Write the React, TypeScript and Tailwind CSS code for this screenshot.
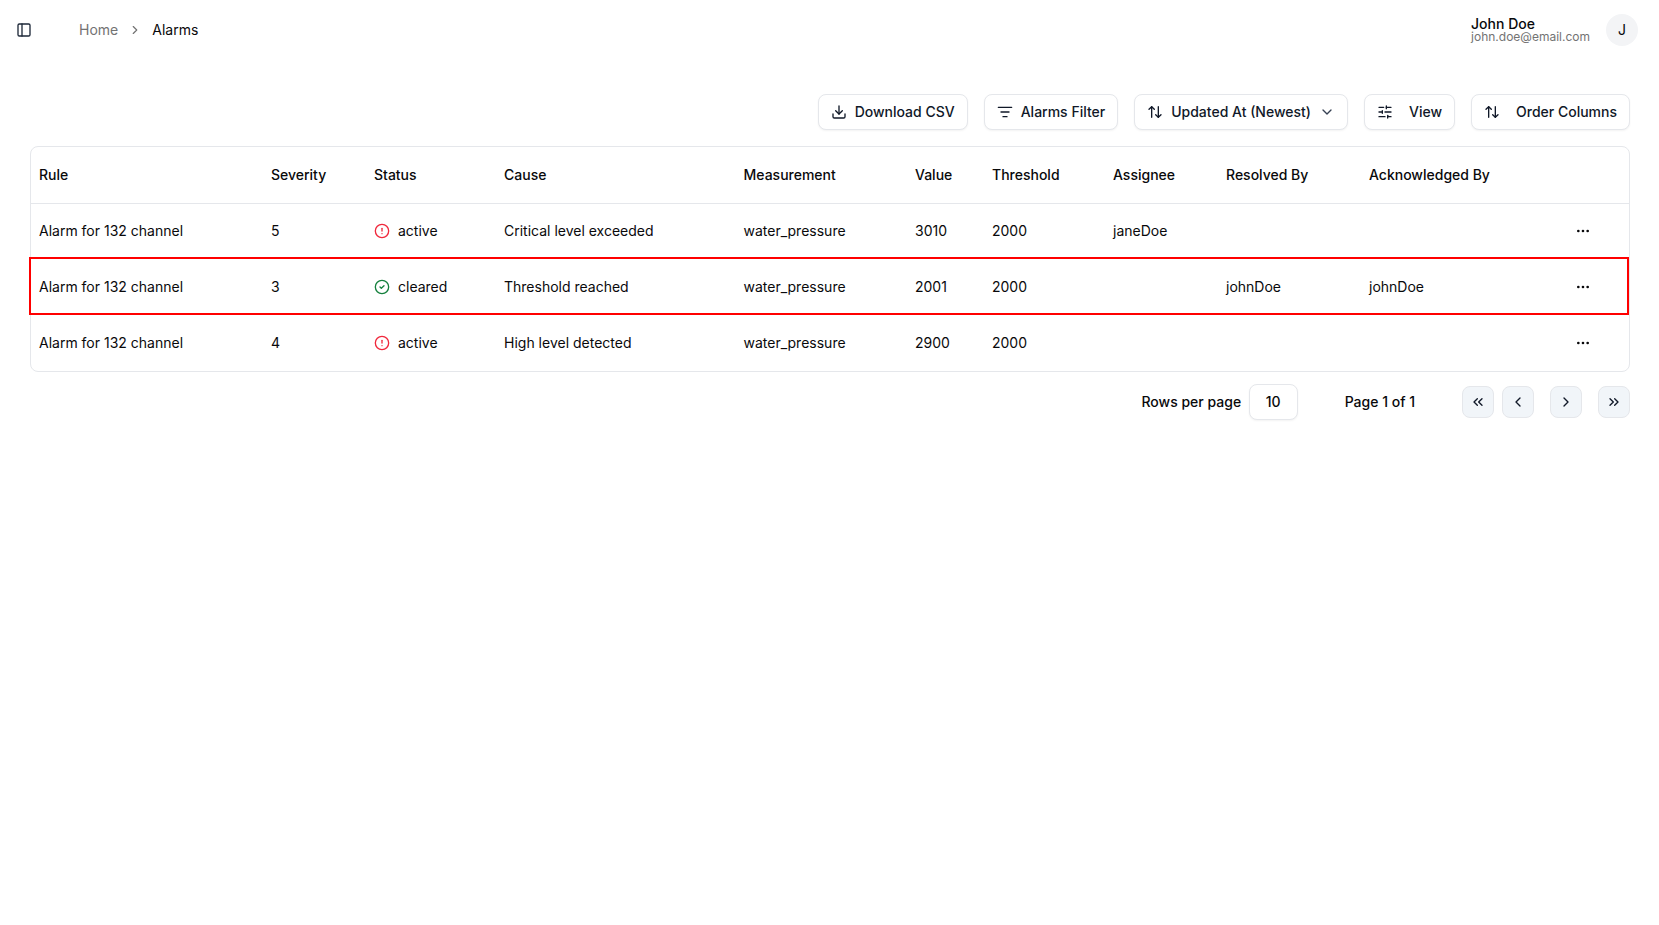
import {
  ArrowUpDown,
  ChevronDown,
  ChevronLeft,
  ChevronRight,
  ChevronsLeft,
  ChevronsRight,
  CircleAlert,
  CircleCheck,
  Download,
  Ellipsis,
  ListFilter,
  PanelLeft,
  SlidersHorizontal,
} from "lucide-react";
import type { ReactNode } from "react";

const rows = [
  { severity: 5, status: "active", cause: "Critical level exceeded", value: 3010, assignee: "janeDoe", resolvedBy: "", ackBy: "" },
  { severity: 3, status: "cleared", cause: "Threshold reached", value: 2001, assignee: "", resolvedBy: "johnDoe", ackBy: "johnDoe" },
  { severity: 4, status: "active", cause: "High level detected", value: 2900, assignee: "", resolvedBy: "", ackBy: "" },
];

const columns = [
  { label: "Rule", width: "w-[232px]" },
  { label: "Severity", width: "w-[103px]" },
  { label: "Status", width: "w-[130px]" },
  { label: "Cause", width: "w-[239.5px]" },
  { label: "Measurement", width: "w-[171.5px]" },
  { label: "Value", width: "w-[77px]" },
  { label: "Threshold", width: "w-[121px]" },
  { label: "Assignee", width: "w-[113px]" },
  { label: "Resolved By", width: "w-[143px]" },
  { label: "Acknowledged By", width: "w-[196px]" },
  { label: "", width: "w-[72px]" },
];

function ToolbarButton({ children, className = "gap-2" }: { children: ReactNode; className?: string }) {
  return (
    <button className={`flex h-9 items-center rounded-lg border border-gray-200 bg-white px-3 text-sm font-medium text-gray-900 shadow-xs ${className}`}>
      {children}
    </button>
  );
}

function PageButton({ children }: { children: ReactNode }) {
  return (
    <button className="flex h-8 w-8 items-center justify-center rounded-lg border border-gray-200 bg-[#f1f5f9] text-gray-900">
      {children}
    </button>
  );
}

export default function App() {
  return (
    <div className="min-h-screen bg-white font-['Inter',sans-serif] text-sm text-[#09090b]">
      <header className="flex h-[60px] items-center justify-between pl-4 pr-[21px]">
        <div className="flex items-center">
          <PanelLeft size={16} className="text-gray-800" />
          <nav className="ml-[47px] flex items-center gap-[10px]">
            <span className="text-neutral-500">Home</span>
            <ChevronRight size={14} className="text-neutral-500" />
            <span>Alarms</span>
          </nav>
        </div>
        <div className="flex items-center gap-4">
          <div className="flex flex-col">
            <span className="text-sm leading-[14px] font-medium">John Doe</span>
            <span className="text-xs leading-[12px] text-neutral-500">john.doe@email.com</span>
          </div>
          <div className="flex h-8 w-8 items-center justify-center rounded-full bg-gray-100">J</div>
        </div>
      </header>

      <main className="pl-[30px] pr-[29px] pt-[34px]">
        <div className="flex justify-end gap-4">
          <ToolbarButton>
            <Download size={16} />
            Download CSV
          </ToolbarButton>
          <ToolbarButton>
            <ListFilter size={16} />
            Alarms Filter
          </ToolbarButton>
          <ToolbarButton>
            <ArrowUpDown size={16} />
            Updated At (Newest)
            <ChevronDown size={16} className="text-gray-700" />
          </ToolbarButton>
          <ToolbarButton className="gap-4">
            <SlidersHorizontal size={16} />
            View
          </ToolbarButton>
          <ToolbarButton className="gap-4">
            <ArrowUpDown size={16} />
            Order Columns
          </ToolbarButton>
        </div>

        <div className="relative mt-4 rounded-lg border border-gray-200">
          <table className="w-full table-fixed border-collapse">
            <thead>
              <tr className="h-14 border-b border-gray-200">
                {columns.map((col) => (
                  <th key={col.label} className={`${col.width} px-2 text-left font-medium`}>
                    {col.label}
                  </th>
                ))}
              </tr>
            </thead>
            <tbody>
              {rows.map((row) => (
                <tr key={row.severity} className="h-14">
                  <td className="px-2">Alarm for 132 channel</td>
                  <td className="px-2">{row.severity}</td>
                  <td className="px-2">
                    <div className="flex items-center gap-2">
                      {row.status === "active" ? (
                        <CircleAlert size={16} className="text-[#f0283c]" />
                      ) : (
                        <CircleCheck size={16} className="text-[#15803d]" />
                      )}
                      {row.status}
                    </div>
                  </td>
                  <td className="px-2">{row.cause}</td>
                  <td className="px-2">water_pressure</td>
                  <td className="px-2">{row.value}</td>
                  <td className="px-2">2000</td>
                  <td className="px-2">{row.assignee}</td>
                  <td className="px-2">{row.resolvedBy}</td>
                  <td className="px-2">{row.ackBy}</td>
                  <td className="px-2">
                    <button className="flex h-9 w-9 items-center justify-center">
                      <Ellipsis size={16} />
                    </button>
                  </td>
                </tr>
              ))}
            </tbody>
          </table>
          {/* highlighted alarm */}
          <div className="pointer-events-none absolute -left-[2px] right-0 top-[110px] h-[58px] border-2 border-[#ff0000]" />
        </div>

        <div className="mt-3 flex items-center justify-end">
          <span className="font-medium">Rows per page</span>
          <div className="ml-[7.5px] flex h-9 w-[49px] items-center justify-center rounded-lg border border-gray-200 bg-white font-medium shadow-xs">
            10
          </div>
          <span className="ml-[47px] font-medium">Page 1 of 1</span>
          <div className="ml-[47px] flex items-center gap-4">
            <div className="flex gap-2">
              <PageButton>
                <ChevronsLeft size={16} />
              </PageButton>
              <PageButton>
                <ChevronLeft size={16} />
              </PageButton>
            </div>
            <PageButton>
              <ChevronRight size={16} />
            </PageButton>
            <PageButton>
              <ChevronsRight size={16} />
            </PageButton>
          </div>
        </div>
      </main>
    </div>
  );
}
